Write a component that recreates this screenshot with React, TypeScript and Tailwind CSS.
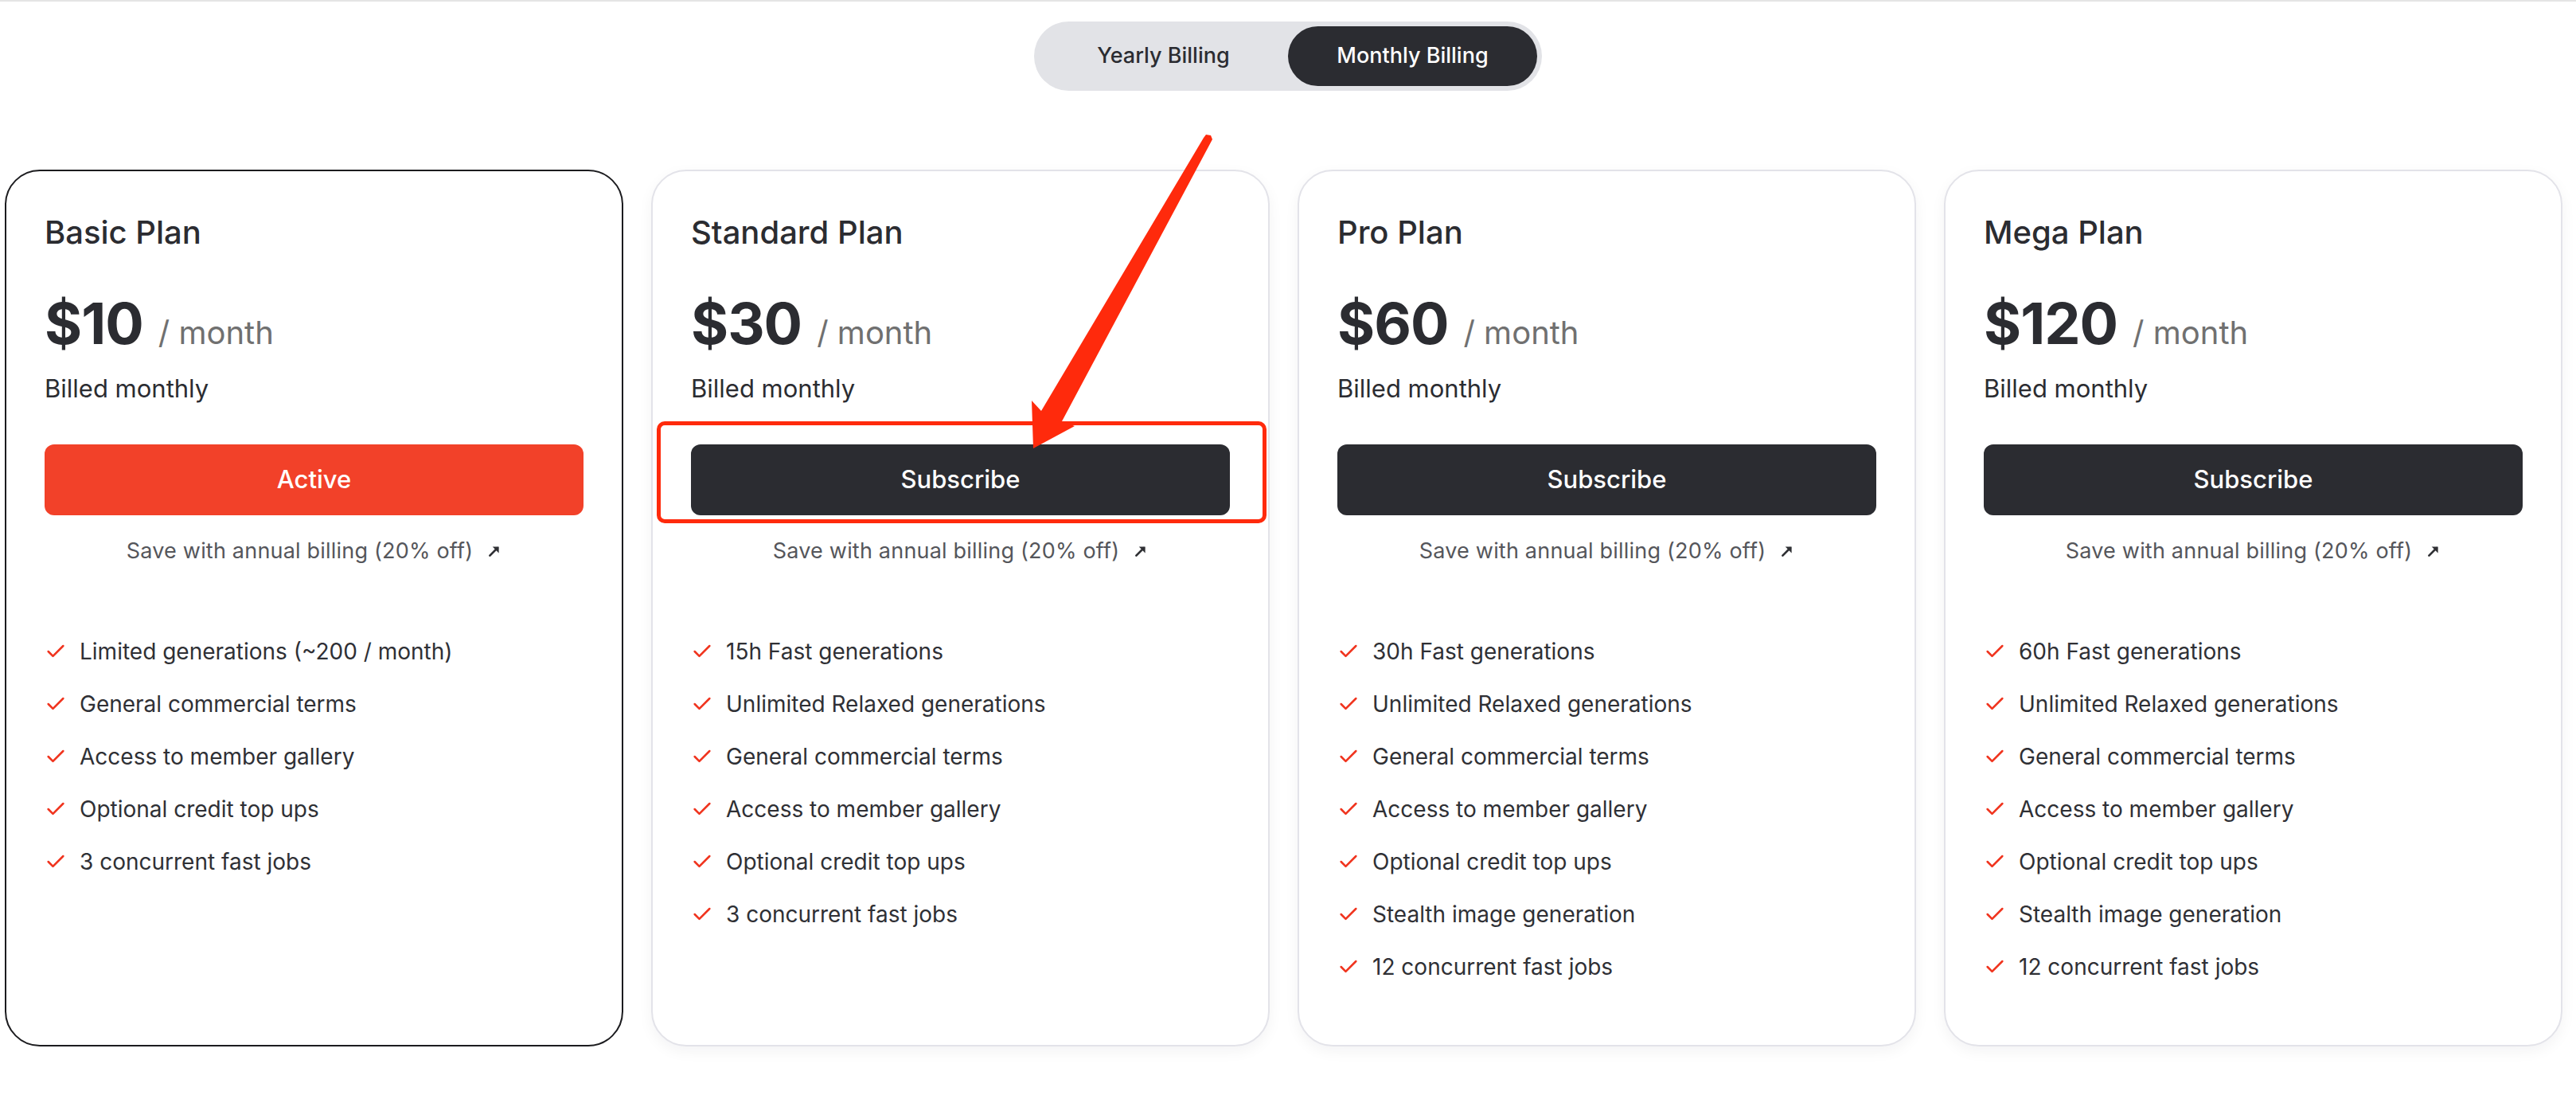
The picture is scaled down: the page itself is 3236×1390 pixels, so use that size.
import { Check } from "lucide-react";

type Plan = {
  name: string;
  price: string;
  active?: boolean;
  features: string[];
};

const plans: Plan[] = [
  {
    name: "Basic Plan",
    price: "$10",
    active: true,
    features: [
      "Limited generations (~200 / month)",
      "General commercial terms",
      "Access to member gallery",
      "Optional credit top ups",
      "3 concurrent fast jobs",
    ],
  },
  {
    name: "Standard Plan",
    price: "$30",
    features: [
      "15h Fast generations",
      "Unlimited Relaxed generations",
      "General commercial terms",
      "Access to member gallery",
      "Optional credit top ups",
      "3 concurrent fast jobs",
    ],
  },
  {
    name: "Pro Plan",
    price: "$60",
    features: [
      "30h Fast generations",
      "Unlimited Relaxed generations",
      "General commercial terms",
      "Access to member gallery",
      "Optional credit top ups",
      "Stealth image generation",
      "12 concurrent fast jobs",
    ],
  },
  {
    name: "Mega Plan",
    price: "$120",
    features: [
      "60h Fast generations",
      "Unlimited Relaxed generations",
      "General commercial terms",
      "Access to member gallery",
      "Optional credit top ups",
      "Stealth image generation",
      "12 concurrent fast jobs",
    ],
  },
];

function SmallArrow() {
  return (
    <svg width="18" height="18" viewBox="0 0 16 16" className="ml-[18px] shrink-0">
      <path d="M3 13 11.5 4.5" stroke="#2f3034" strokeWidth="2.4" strokeLinecap="round" />
      <path d="M6 3.2h7v7z" fill="#2f3034" />
    </svg>
  );
}

function PlanCard({ plan }: { plan: Plan }) {
  return (
    <div
      className={`flex w-[777px] shrink-0 flex-col rounded-[44px] border-2 bg-white px-[48px] pb-[80px] pt-[53px] ${
        plan.active
          ? "border-[#1c1c1f]"
          : "border-[#e3e3e9] shadow-[0_6px_18px_rgba(20,20,40,0.05)]"
      }`}
    >
      <h2 className="text-[40px] font-medium leading-[48px] text-[#2b2c31]">{plan.name}</h2>

      <div className="mt-[50px] flex items-baseline gap-[19px]">
        <span className="text-[72px] font-bold leading-[80px] tracking-[-1px] text-[#2b2c31]">
          {plan.price}
        </span>
        <span className="text-[40px] leading-[48px] text-[#707070]">/ month</span>
      </div>

      <p className="mt-[22px] text-[31px] leading-[40px] text-[#2b2c31]">Billed monthly</p>

      <button
        className={`mt-[50px] flex h-[89px] w-full items-center justify-center rounded-[12px] text-[31px] font-medium text-white ${
          plan.active ? "bg-[#f24129]" : "bg-[#2b2c31]"
        }`}
      >
        {plan.active ? "Active" : "Subscribe"}
      </button>

      <div className="mt-[27px] flex items-center justify-center text-[27px] leading-[36px] tracking-[0.2px] text-[#55565b]">
        <span>Save with annual billing (20% off)</span>
        <SmallArrow />
      </div>

      <ul className="mt-[90px] flex flex-col gap-[30px]">
        {plan.features.map((f) => (
          <li key={f} className="flex items-center text-[28px] leading-[36px] text-[#2f3035]">
            <Check size={28} strokeWidth={2.2} className="mr-[16px] shrink-0 text-[#f0341e]" />
            <span>{f}</span>
          </li>
        ))}
      </ul>
    </div>
  );
}

export default function App() {
  return (
    <div className="relative min-h-screen border-t-2 border-[#e4e4e4] bg-white font-['Inter','Liberation_Sans',sans-serif]">
      <div className="flex justify-center pt-[25px]">
        <div className="flex h-[87px] w-[638px] rounded-full bg-[#e2e3e7] p-[6px]">
          <div className="flex flex-1 items-center justify-center rounded-full text-[27px] font-medium text-[#2b2c31]">
            Yearly Billing
          </div>
          <div className="flex flex-1 items-center justify-center rounded-full bg-[#2b2c31] text-[27px] font-medium text-white">
            Monthly Billing
          </div>
        </div>
      </div>

      <div className="mt-[99px] flex gap-[35px] px-[6px]">
        {plans.map((p) => (
          <PlanCard key={p.name} plan={p} />
        ))}
      </div>

      {/* annotation overlay */}
      <div className="pointer-events-none absolute left-[825px] top-[527px] h-[128px] w-[766px] rounded-[10px] border-[5px] border-[#ff2a0c]" />
      <svg
        className="pointer-events-none absolute left-[1290px] top-[163px]"
        width="240"
        height="405"
        viewBox="0 0 240 405"
      >
        <polygon
          points="222,8 225,4 231,5 233,10 44,364 60,370 8,398 6,338 18,351"
          fill="#ff2a0c"
          strokeLinejoin="round"
        />
      </svg>
    </div>
  );
}
